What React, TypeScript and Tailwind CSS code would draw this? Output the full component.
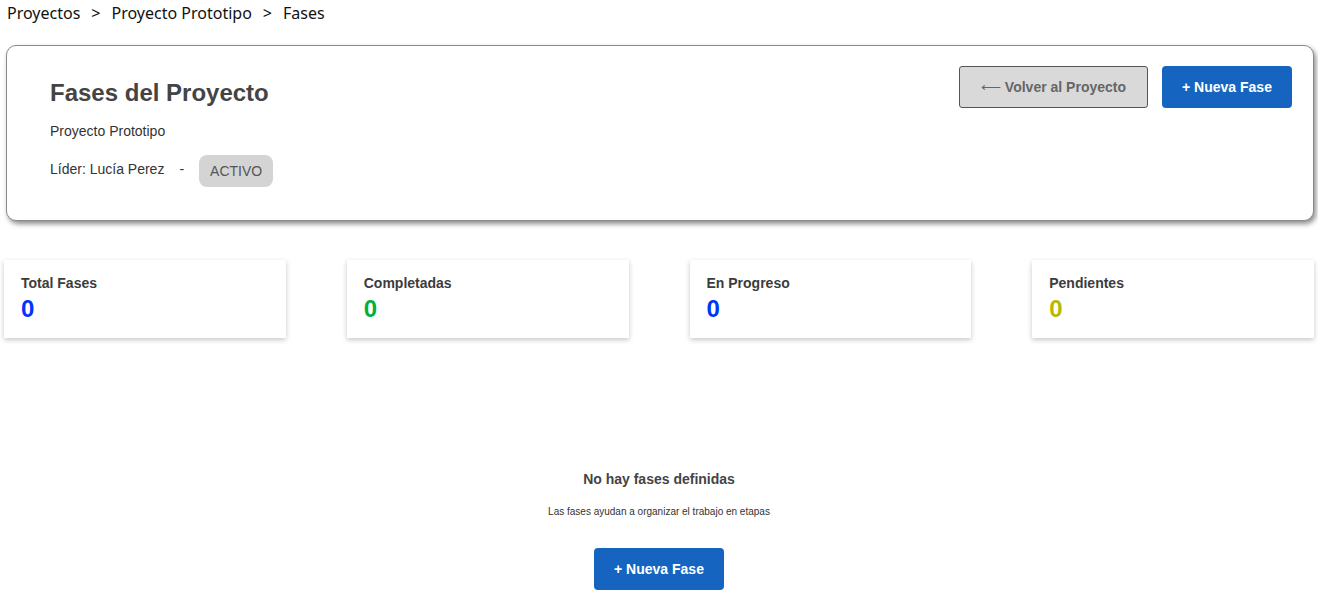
import React from "react";

const arial = { fontFamily: '"Liberation Sans", Arial, sans-serif' };

function StatCard({ title, value, color }: { title: string; value: string; color: string }) {
  return (
    <div className="bg-white shadow-[0_2px_5px_rgba(0,0,0,0.22)] pt-[13px] pb-[13px] px-[17px]">
      <div className="text-[14px] leading-[20px] font-bold text-[#3c3c3c]">{title}</div>
      <div className={`text-[24px] leading-[32px] font-bold ${color}`}>{value}</div>
    </div>
  );
}

export default function App() {
  return (
    <div className="min-h-[590px] bg-white text-[#333]">
      <div
        className="pl-[7px] pt-[1px] h-[45px] text-[16px] leading-[24px] text-[#111] flex gap-[11px]"
        style={{ fontFamily: '"Noto Sans", "Open Sans", sans-serif' }}
      >
        <span>Proyectos</span>
        <span>&gt;</span>
        <span>Proyecto Prototipo</span>
        <span>&gt;</span>
        <span>Fases</span>
      </div>

      <div style={arial}>
        <div className="ml-[6px] mr-[4px] h-[176px] border border-[#8a8a8a] rounded-[10px] bg-white shadow-[2px_3px_5px_rgba(0,0,0,0.45)] flex justify-between pr-[21px] pt-[20px]">
          <div className="pl-[43px] pt-[13px]">
            <h1 className="text-[24px] leading-[28px] font-bold text-[#444]">Fases del Proyecto</h1>
            <div className="mt-[14px] text-[14px] leading-[20px] text-[#333]">Proyecto Prototipo</div>
            <div className="mt-[14px] flex items-center text-[14px] text-[#333]">
              <span className="-mt-[4px]">Líder: Lucía Perez</span>
              <span className="-mt-[4px] ml-[15px]">-</span>
              <span className="ml-[15px] h-[32px] px-[11px] rounded-[8px] bg-[#d4d4d4] text-[#555] flex items-center">
                ACTIVO
              </span>
            </div>
          </div>
          <div className="flex gap-[14px] items-start">
            <button className="h-[42px] w-[189px] bg-[#d9d9d9] border border-[#555] rounded-[3px] text-[14px] font-bold text-[#666]">
              <span className="font-normal">⟵</span> Volver al Proyecto
            </button>
            <button className="h-[42px] w-[130px] bg-[#1565c0] rounded-[4px] text-[14px] font-bold text-white">
              + Nueva Fase
            </button>
          </div>
        </div>

        <div className="mt-[39px] px-[4px] grid grid-cols-4 gap-[61px]">
          <StatCard title="Total Fases" value="0" color="text-[#0033ff]" />
          <StatCard title="Completadas" value="0" color="text-[#00b03c]" />
          <StatCard title="En Progreso" value="0" color="text-[#0033ff]" />
          <StatCard title="Pendientes" value="0" color="text-[#b8b800]" />
        </div>

        <div className="mt-[131px] flex flex-col items-center">
          <div className="text-[14px] leading-[20px] font-bold text-[#444]">No hay fases definidas</div>
          <div className="mt-[16px] text-[10px] leading-[14px] text-[#333]">
            Las fases ayudan a organizar el trabajo en etapas
          </div>
          <button className="mt-[29px] h-[42px] w-[130px] bg-[#1565c0] rounded-[4px] text-[14px] font-bold text-white">
            + Nueva Fase
          </button>
        </div>
      </div>
    </div>
  );
}
